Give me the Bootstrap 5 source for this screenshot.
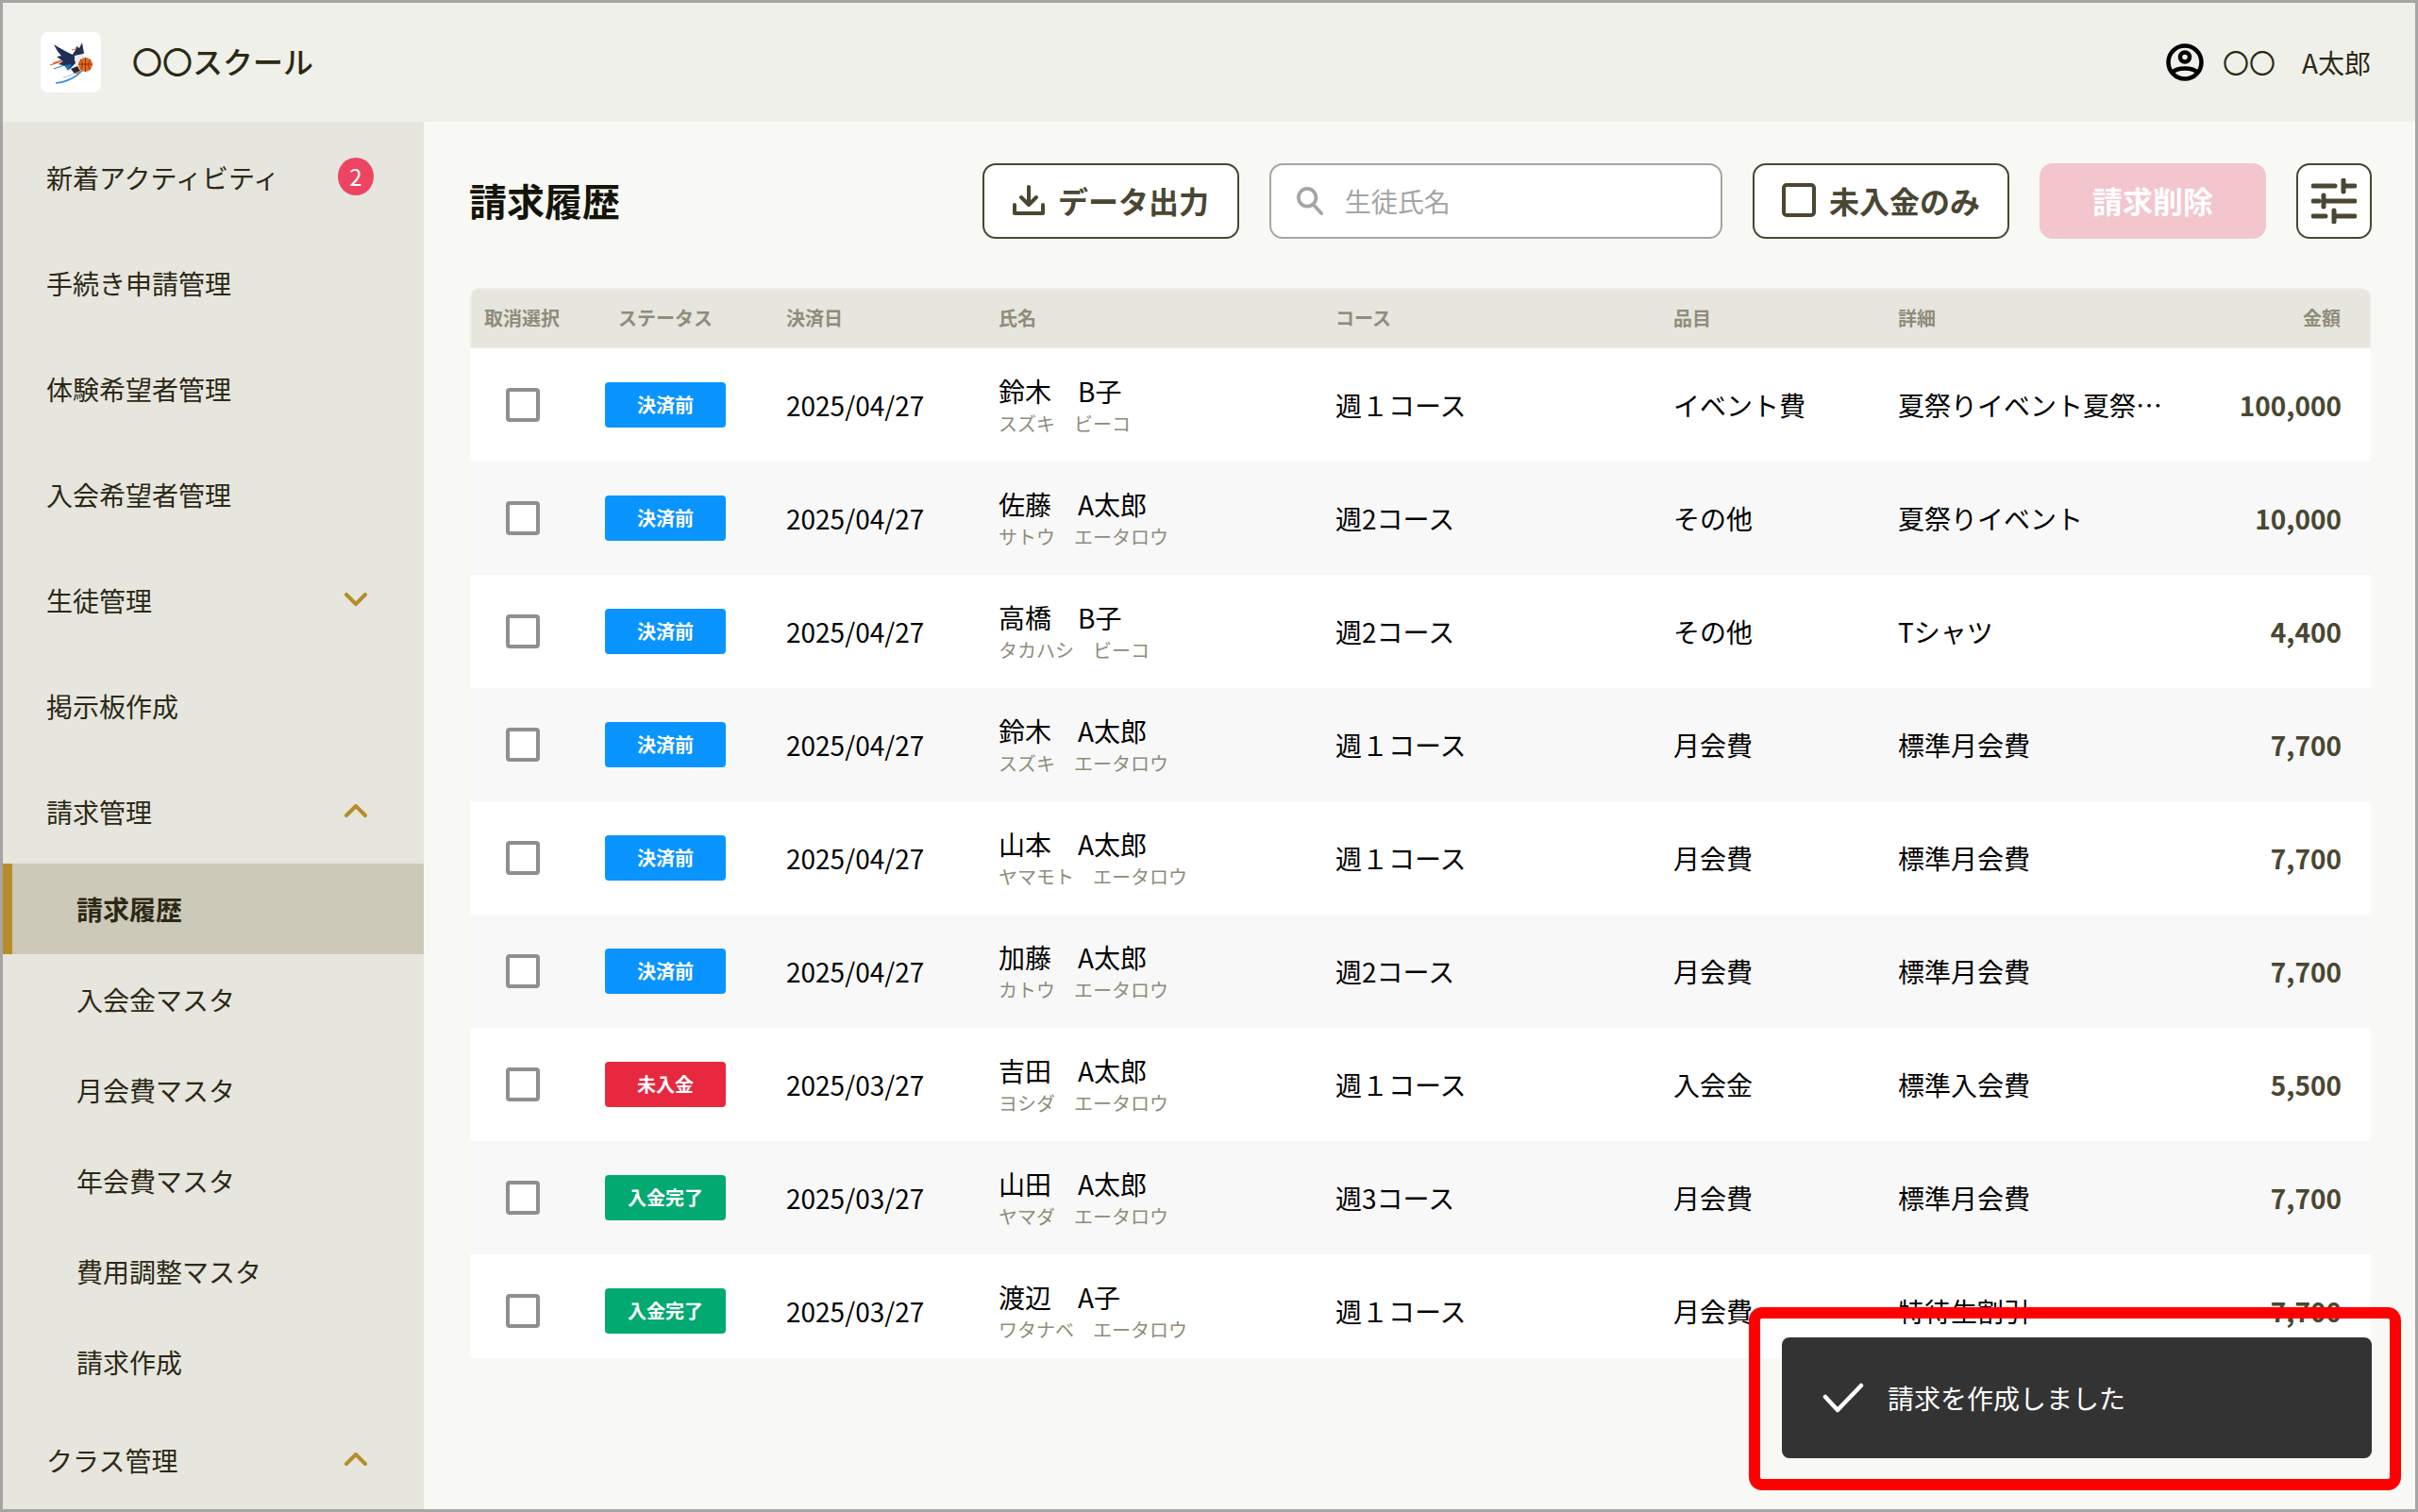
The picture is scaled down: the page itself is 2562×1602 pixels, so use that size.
<!DOCTYPE html>
<html lang="ja">
<head>
  <meta charset="UTF-8" />
  <meta name="viewport" content="width=device-width, initial-scale=1.0"/>
  <title>請求履歴</title>
  <link href="https://cdn.jsdelivr.net/npm/bootstrap@5.3.0/dist/css/bootstrap.min.css" rel="stylesheet" />
  <style>
    html, body { height: 100%; overflow: hidden; }
    body {
      font-family: "Noto Sans CJK JP", "Noto Sans", sans-serif;
      background: #a5a5a5;
      color: #000;
    }
    .shell { position: relative; margin: 3px; height: 1596px; background: #f8f9f4; overflow: hidden; }

    /* header */
    .top-bar { height: 126px; background: #f0f0ea; padding: 0 47px 0 40px; }
    .logo-box { width: 64px; height: 64px; background: #fff; border-radius: 8px; }
    .school-name { margin-left: 33px; padding-bottom: 4px; font-size: 32px; font-weight: 500; color: #2b2914; line-height: 1; }
    .user-name { margin-left: 20px; font-size: 28px; color: #2b2914; line-height: 1; }

    /* sidebar */
    .side-menu { width: 446px; height: 1470px; background: #e6e5de; padding-top: 3px; flex: none; overflow: hidden; }
    .side-item { height: 112px; padding: 0 60px 0 46px; font-size: 28px; color: #2b2914; }
    .side-sub { height: 96px; padding-left: 78px; font-size: 28px; color: #2b2914; }
    .side-sub.is-active { margin-top: -1px; background: #ccc9b9; border-left: 10px solid #b68d2a; padding-left: 68px; font-weight: 700; }
    .count-dot { width: 38px; height: 40px; margin: 0 -7px 2px 0; border-radius: 50%; background: #ee4462; color: #fff; font-size: 24px; line-height: 1; }
    .chev { width: 24px; height: 14px; margin-bottom: 2px; }

    /* toolbar */
    .content-area { padding: 44px 46px 0 49px; min-width: 0; }
    .tool-row { height: 80px; margin-bottom: 52px; gap: 32px; }
    .page-title { margin: 0 auto 0 -1px; padding-bottom: 2px; font-size: 40px; font-weight: 700; color: #14140a; }
    .tool-btn {
      height: 80px; padding: 0 0 2px; gap: 14px;
      background: #fff; border: 2px solid #4a4632; border-radius: 14px;
      color: #4a4632; font-size: 32px; font-weight: 700;
    }
    .tool-export { width: 272px; }
    .tool-unpaid { width: 272px; }
    .tool-delete { width: 240px; background: #f3c6ce; border-color: #f3c6ce; color: #fff; }
    .tool-filter { width: 80px; padding: 0; }
    .search-box { width: 480px; height: 80px; padding-left: 26px; background: #fff; border: 2px solid #a5a5a5; border-radius: 14px; }
    .search-box .form-control { border: 0; padding: 0 0 0 22px; background: transparent; font-size: 28px; box-shadow: none; }
    .search-box .form-control::placeholder { color: #a5a5a5; }

    /* table */
    .bill-wrap { height: 1134px; overflow: hidden; }
    .bill-table { table-layout: fixed; width: 2014px; margin: 0; border-collapse: separate; border-spacing: 0; }
    .bill-table th {
      height: 64px; padding: 0 0 0 33px; vertical-align: middle;
      background: #e6e5de; border: 0; border-top: 2px solid #ecebe6; border-bottom: 2px solid #ecebe6;
      color: #8f8c7a; font-size: 20px; font-weight: 700;
    }
    .bill-table th:first-child { padding-left: 13px; border-top-left-radius: 10px; border-left: 2px solid #ecebe6; }
    .bill-table th:last-child { padding: 0 30px 0 0; border-top-right-radius: 10px; border-right: 2px solid #ecebe6; }
    .bill-table th.th-status { padding: 0; text-align: center; }
    .bill-table td {
      height: 120px; padding: 0 0 0 33px; vertical-align: middle;
      background: #fff; border: 0; color: #000; font-size: 28px;
    }
    .bill-table tbody tr:nth-child(even) td { background: #f8f8f8; }
    .bill-table td.td-check { padding: 0 0 0 38px; }
    .bill-table td.td-status { padding: 0 0 0 31px; }
    .bill-table td.td-detail { padding-right: 0; }
    .bill-table td.td-amount { padding: 0 31px 0 0; text-align: right; font-weight: 700; color: #4a4632; }
    .pick-box.form-check-input { display: block; width: 36px; height: 36px; margin: 0; border: 4px solid #8e8e93; border-radius: 4px; }
    .state-tag { width: 128px; height: 48px; border-radius: 4px; color: #fff; font-size: 20px; font-weight: 700; }
    .state-before { background: #0a94ff; }
    .state-unpaid { background: #e8283f; }
    .state-done { background: #02a971; }
    .name-main { line-height: 40px; }
    .name-kana { line-height: 30px; font-size: 20px; color: #8f8c7a; }

    /* toast */
    .done-toast.toast {
      position: absolute; right: 46px; bottom: 54px; width: 625px; height: 128px;
      padding-left: 43px; gap: 25px; background: #333; border: 0; border-radius: 8px; box-shadow: none;
      color: #fff; font-size: 28px;
    }
    .note-frame { position: absolute; right: 15px; bottom: 20px; width: 691px; height: 194px; border: 12px solid #f00; border-radius: 14px; }
  </style>
</head>
<body>
  <div class="shell">
    <header class="top-bar d-flex align-items-center">
      <div class="logo-box d-flex align-items-center justify-content-center">
        <svg width="64" height="64" viewBox="0 0 64 64">
          <path d="M16 54 C28 53 40 47 46 38" fill="none" stroke="#2f8fe0" stroke-width="1.6"/>
          <path d="M24 48 C32 46 40 43 44 38" fill="none" stroke="#9cc8ee" stroke-width="1"/>
          <path d="M10 35 L26 30 M13 33 L27 28" stroke="#e8622a" stroke-width="1.3"/>
          <path d="M14 39 L28 34" stroke="#2f8fe0" stroke-width="1.2"/>
          <path d="M14 13 C20 17 30 22 36 25 L37 33 L30 40 C28 36 24 35 19 34 L24 31 L17 26 L22 25 C18 21 16 17 14 13 Z" fill="#1f2f56"/>
          <path d="M33 25 L37 19 L38 15 L41 17 L44 11 L45 17 L46 22 L42 27 L36 28 Z" fill="#26304f"/>
          <path d="M36 25 L45 23 L46 28 L42 31 L38 33 L36 30 Z" fill="#e9ecf2"/>
          <path d="M33 19 L38 18" stroke="#e8622a" stroke-width="1.2"/>
          <circle cx="47.500" cy="34.500" r="7.500" fill="#e8691f"/>
          <path d="M40 34 H55 M47.500 27 V42 M42 29 C45 32 45 38 42 40 M53 29 C50 32 50 38 53 40" fill="none" stroke="#6b2c0a" stroke-width=".8"/>
          <path d="M25 35 L33 34 L29 41 Z" fill="#1d6fc0"/>
          <path d="M32 39 L39 36 L42 41 L36 44 Z" fill="#20283f"/>
          <path d="M36 43 L42 41 L40 45 Z" fill="#e8691f"/>
        </svg>
      </div>
      <div class="school-name">〇〇スクール</div>
      <div class="d-flex align-items-center ms-auto">
        <svg width="40" height="40" viewBox="0 0 40 40" fill="none" stroke="#000" stroke-width="4.500">
          <circle cx="20" cy="20" r="17.500"/>
          <circle cx="20" cy="14.500" r="5"/>
          <path d="M6 31 C12 25 28 25 34 31"/>
        </svg>
        <div class="user-name">〇〇　A太郎</div>
      </div>
    </header>

    <div class="d-flex">
      <nav class="side-menu">
        <div class="side-item d-flex align-items-center justify-content-between">新着アクティビティ<span class="count-dot d-flex align-items-center justify-content-center">2</span></div>
        <div class="side-item d-flex align-items-center">手続き申請管理</div>
        <div class="side-item d-flex align-items-center">体験希望者管理</div>
        <div class="side-item d-flex align-items-center">入会希望者管理</div>
        <div class="side-item d-flex align-items-center justify-content-between">生徒管理
          <svg class="chev" viewBox="0 0 24 14" fill="none" stroke="#b68d2a" stroke-width="4" stroke-linecap="round" stroke-linejoin="round"><path d="M2 2 L12 12 L22 2"/></svg>
        </div>
        <div class="side-item d-flex align-items-center">掲示板作成</div>
        <div class="side-item d-flex align-items-center justify-content-between">請求管理
          <svg class="chev" viewBox="0 0 24 14" fill="none" stroke="#b68d2a" stroke-width="4" stroke-linecap="round" stroke-linejoin="round"><path d="M2 12 L12 2 L22 12"/></svg>
        </div>
        <div class="side-sub is-active d-flex align-items-center">請求履歴</div>
        <div class="side-sub d-flex align-items-center">入会金マスタ</div>
        <div class="side-sub d-flex align-items-center">月会費マスタ</div>
        <div class="side-sub d-flex align-items-center">年会費マスタ</div>
        <div class="side-sub d-flex align-items-center">費用調整マスタ</div>
        <div class="side-sub d-flex align-items-center">請求作成</div>
        <div class="side-item d-flex align-items-center justify-content-between">クラス管理
          <svg class="chev" viewBox="0 0 24 14" fill="none" stroke="#b68d2a" stroke-width="4" stroke-linecap="round" stroke-linejoin="round"><path d="M2 12 L12 2 L22 12"/></svg>
        </div>
      </nav>

      <main class="content-area flex-grow-1">
        <div class="tool-row d-flex align-items-center">
          <h1 class="page-title">請求履歴</h1>
          <button class="btn tool-btn tool-export d-flex align-items-center justify-content-center">
            <svg width="34" height="32" viewBox="0 0 34 32" fill="none" stroke="#4a4632" stroke-width="4" stroke-linecap="round" stroke-linejoin="round">
              <path d="M17 2 V20 M9 13 L17 21 L25 13 M2 21 V30 H32 V21"/>
            </svg>
            データ出力
          </button>
          <div class="search-box d-flex align-items-center">
            <svg width="32" height="34" viewBox="0 0 32 34" fill="none" stroke="#a5a5a5" stroke-width="4" stroke-linecap="round">
              <circle cx="13" cy="13" r="10"/>
              <path d="M20 21 L29 31"/>
            </svg>
            <input class="form-control" type="text" placeholder="生徒氏名" />
          </div>
          <button class="btn tool-btn tool-unpaid d-flex align-items-center justify-content-center">
            <svg width="36" height="36" viewBox="0 0 36 36" fill="none" stroke="#4a4632" stroke-width="4"><rect x="2" y="2" width="32" height="32" rx="3"/></svg>
            未入金のみ
          </button>
          <button class="btn tool-btn tool-delete d-flex align-items-center justify-content-center">請求削除</button>
          <button class="btn tool-btn tool-filter d-flex align-items-center justify-content-center">
            <svg width="48" height="48" viewBox="0 0 48 48" fill="none" stroke="#4a4632" stroke-width="5" stroke-linecap="round">
              <path d="M2 8 H25 M34 2 V14 M34 8 H46 M2 24 H8 M13 18 V30 M13 24 H46 M2 40 H15 M24 34 V46 M24 40 H46"/>
            </svg>
          </button>
        </div>

        <div class="bill-wrap">
          <table class="table bill-table">
            <colgroup>
              <col style="width:112px"><col style="width:190px"><col style="width:225px"><col style="width:357px"><col style="width:358px"><col style="width:238px"><col style="width:322px"><col style="width:212px">
            </colgroup>
            <thead>
              <tr><th>取消選択</th><th class="th-status">ステータス</th><th>決済日</th><th>氏名</th><th>コース</th><th>品目</th><th>詳細</th><th class="text-end">金額</th></tr>
            </thead>
            <tbody id="bill-rows"></tbody>
          </table>
        </div>
      </main>
    </div>

    <div class="note-frame"></div>
    <div class="toast show done-toast d-flex align-items-center">
      <svg width="44" height="32" viewBox="0 0 44 32" fill="none" stroke="#fff" stroke-width="4.500" stroke-linecap="round" stroke-linejoin="round"><path d="M3 15 L16 29 L41 3"/></svg>
      請求を作成しました
    </div>
  </div>

  <script>
    const rows = [
      ["before", "決済前", "2025/04/27", "鈴木　B子", "スズキ　ビーコ", "週１コース", "イベント費", "夏祭りイベント夏祭りイベント", "100,000"],
      ["before", "決済前", "2025/04/27", "佐藤　A太郎", "サトウ　エータロウ", "週2コース", "その他", "夏祭りイベント", "10,000"],
      ["before", "決済前", "2025/04/27", "高橋　B子", "タカハシ　ビーコ", "週2コース", "その他", "Tシャツ", "4,400"],
      ["before", "決済前", "2025/04/27", "鈴木　A太郎", "スズキ　エータロウ", "週１コース", "月会費", "標準月会費", "7,700"],
      ["before", "決済前", "2025/04/27", "山本　A太郎", "ヤマモト　エータロウ", "週１コース", "月会費", "標準月会費", "7,700"],
      ["before", "決済前", "2025/04/27", "加藤　A太郎", "カトウ　エータロウ", "週2コース", "月会費", "標準月会費", "7,700"],
      ["unpaid", "未入金", "2025/03/27", "吉田　A太郎", "ヨシダ　エータロウ", "週１コース", "入会金", "標準入会費", "5,500"],
      ["done", "入金完了", "2025/03/27", "山田　A太郎", "ヤマダ　エータロウ", "週3コース", "月会費", "標準月会費", "7,700"],
      ["done", "入金完了", "2025/03/27", "渡辺　A子", "ワタナベ　エータロウ", "週１コース", "月会費", "特待生割引", "7,700"]
    ];
    document.getElementById("bill-rows").innerHTML = rows.map(r => `
      <tr>
        <td class="td-check"><input class="form-check-input pick-box" type="checkbox"></td>
        <td class="td-status"><span class="state-tag state-${r[0]} d-flex align-items-center justify-content-center">${r[1]}</span></td>
        <td>${r[2]}</td>
        <td><div class="name-main">${r[3]}</div><div class="name-kana">${r[4]}</div></td>
        <td>${r[5]}</td>
        <td>${r[6]}</td>
        <td class="td-detail text-truncate">${r[7]}</td>
        <td class="td-amount">${r[8]}</td>
      </tr>`).join("");
  </script>
  <script src="https://cdn.jsdelivr.net/npm/bootstrap@5.3.0/dist/js/bootstrap.bundle.min.js" defer></script>
</body>
</html>
